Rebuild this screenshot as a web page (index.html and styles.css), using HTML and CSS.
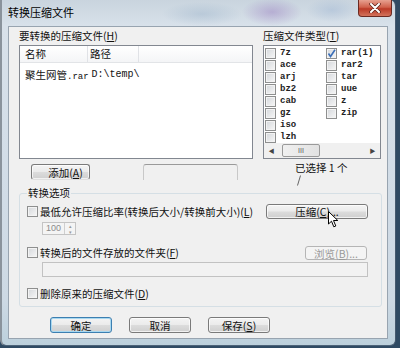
FILE: index.html
```html
<!DOCTYPE html>
<html lang="zh-CN">
<head>
    <meta charset="UTF-8">
    <title>转换压缩文件</title>
    <link rel="stylesheet" href="styles.css">
</head>
<body>

<div class="window">
    <div class="titlebar">
        <span class="title">转换压缩文件</span>
        <span class="close">
            <svg width="12" height="10" viewBox="0 0 12 10">
                <path d="M2 1 L10 9 M10 1 L2 9" stroke="#5a2018" stroke-width="3.4" stroke-linecap="round"/>
                <path d="M2 1 L10 9 M10 1 L2 9" stroke="#fff" stroke-width="2" stroke-linecap="round"/>
            </svg>
        </span>
    </div>

    <div class="client">
        <div class="top">
            <div class="col-files">
                <div class="label">要转换的压缩文件(<u>H</u>)</div>
                <div class="listview">
                    <div class="lv-head">
                        <span class="c1">名称</span>
                        <span class="c2">路径</span>
                        <span class="c3"></span>
                    </div>
                    <div class="lv-row">
                        <span class="name">聚生网管<span class="mono">.rar</span></span>
                        <span class="path mono">D:\temp\</span>
                    </div>
                </div>
                <div class="file-buttons">
                    <button class="btn btn-add">添加(<u>A</u>)</button>
                    <span class="btn-ghost"></span>
                </div>
            </div>

            <div class="col-types">
                <div class="label">压缩文件类型(<u>T</u>)</div>
                <div class="typebox">
                    <div class="types">
                        <div class="type"><span class="cb"></span>7z</div>
                        <div class="type"><span class="cb"></span>ace</div>
                        <div class="type"><span class="cb"></span>arj</div>
                        <div class="type"><span class="cb"></span>bz2</div>
                        <div class="type"><span class="cb"></span>cab</div>
                        <div class="type"><span class="cb"></span>gz</div>
                        <div class="type"><span class="cb"></span>iso</div>
                        <div class="type"><span class="cb"></span>lzh</div>
                        <div class="type"><span class="cb checked"><svg width="9" height="9" viewBox="0 0 9 9"><path d="M1.5 4.5 L3.5 7.5 L8 0.8" fill="none" stroke="#3b6fb8" stroke-width="1.6"/></svg></span>rar(1)</div>
                        <div class="type"><span class="cb"></span>rar2</div>
                        <div class="type"><span class="cb"></span>tar</div>
                        <div class="type"><span class="cb"></span>uue</div>
                        <div class="type"><span class="cb"></span>z</div>
                        <div class="type"><span class="cb"></span>zip</div>
                    </div>
                    <div class="hscroll">
                        <span class="arrow">&#9664;</span>
                        <span class="thumb">III</span>
                        <span class="arrow right">&#9654;</span>
                    </div>
                </div>
                <div class="selected">
                    已选择 1 个
                    <svg class="caret" width="6" height="11" viewBox="0 0 6 11"><path d="M4.5 0.5 L1.5 10.5" stroke="#666" stroke-width="1"/></svg>
                </div>
            </div>
        </div>

        <fieldset class="group">
            <legend>转换选项</legend>

            <div class="opt-row">
                <span class="cb"></span>
                <span class="opt-text">最低允许压缩比率(转换后大小/转换前大小)(<u>L</u>)</span>
                <button class="btn btn-compress">压缩(<u>C</u>)...
                    <svg class="pointer" width="11" height="17" viewBox="0 0 11 17">
                        <path d="M0.5 0.5 L0.5 13 L3.5 10.2 L5.8 15.8 L7.8 15 L5.5 9.5 L9.8 9.5 Z" fill="#fff" stroke="#000" stroke-width="1"/>
                    </svg>
                </button>
            </div>
            <div class="spin">
                <span class="spin-val">100</span>
                <span class="spin-btns"><span>&#9652;</span><span>&#9662;</span></span>
            </div>

            <div class="opt-row row-folder">
                <span class="cb"></span>
                <span class="opt-text">转换后的文件存放的文件夹(<u>F</u>)</span>
                <button class="btn btn-browse" disabled>浏览(<u>B</u>)...</button>
            </div>
            <div class="textfield"></div>

            <div class="opt-row row-delete">
                <span class="cb"></span>
                <span class="opt-text">删除原来的压缩文件(<u>D</u>)</span>
            </div>
        </fieldset>

        <div class="dialog-buttons">
            <button class="btn btn-default">确定</button>
            <button class="btn">取消</button>
            <button class="btn">保存(<u>S</u>)</button>
        </div>
    </div>
</div>

</body>
</html>
```

FILE: styles.css
```css
body {
    margin: 0;
    width: 400px;
    height: 348px;
    overflow: hidden;
    background: #2f4a63;
    font-family: "Noto Sans CJK SC", "Noto Sans", sans-serif;
    font-size: 10.5px;
    color: #111;
}
u {
    text-decoration: underline;
}
.window {
    width: 396px;
    height: 346px;
    box-sizing: border-box;
    border-left: 2px solid #8a939c;
    border-right: 1px solid #45596e;
    border-bottom: 1px solid #4d6378;
    border-radius: 0 6px 6px 6px;
    background:
        radial-gradient(ellipse 30px 14px at 270px 12px, rgba(150, 120, 190, 0.45), transparent),
        radial-gradient(ellipse 40px 12px at 200px 14px, rgba(150, 175, 200, 0.4), transparent),
        radial-gradient(ellipse 26px 12px at 330px 10px, rgba(170, 190, 215, 0.6), transparent),
        linear-gradient(#c9d4de, #d8e1ea 26px, #cdd9e4 300px, #bcd0dc);
}
.titlebar {
    height: 26px;
    display: flex;
    align-items: flex-start;
}
.title {
    padding-left: 6px;
    line-height: 24px;
    font-size: 11px;
    color: #000;
}
.close {
    margin-left: auto;
    margin-right: 3px;
    width: 34px;
    height: 17px;
    box-sizing: border-box;
    border: 1px solid #6b2a22;
    border-top: none;
    border-radius: 0 0 4px 4px;
    background: linear-gradient(#e7a190, #d0614c 45%, #bb3a27 55%, #d2735c);
    display: flex;
    align-items: center;
    justify-content: center;
}
.client {
    margin-left: 6px;
    width: 380px;
    height: 313px;
    box-sizing: border-box;
    border: 1px solid #98a4b0;
    background: #f0f0f0;
}
.top {
    display: flex;
    gap: 10px;
    padding: 1px 0 0 10px;
}
.label {
    line-height: 16px;
    height: 16px;
}
.col-files {
    width: 234px;
}
.listview {
    margin-top: 1px;
    height: 114px;
    box-sizing: border-box;
    border: 1px solid #828790;
    background: #fff;
}
.lv-head {
    display: flex;
    height: 16px;
    line-height: 16px;
    background: linear-gradient(#fff, #f4f5f7);
    border-bottom: 1px solid #e2e4e7;
}
.lv-head span {
    box-sizing: border-box;
    border-right: 1px solid #e0e2e6;
}
.lv-head .c3 {
    flex: 1;
    border-right: none;
}
.c1 {
    width: 68px;
    padding-left: 5px;
    box-sizing: border-box;
}
.c2 {
    width: 51px;
    padding-left: 2px;
    box-sizing: border-box;
}
.lv-row {
    display: flex;
    margin-top: 4px;
    padding-left: 5px;
    line-height: 16px;
    white-space: nowrap;
}
.name {
    padding-right: 3px;
}
.name .mono {
    font-size: 9px;
}
.mono {
    font-family: "Liberation Mono", monospace;
    font-size: 10px;
}
.file-buttons {
    display: flex;
    margin-top: 5px;
    padding-left: 12px;
    gap: 53px;
}
.btn {
    height: 16px;
    padding: 0;
    box-sizing: border-box;
    border: 1px solid #7a7a7a;
    border-radius: 3px;
    background: linear-gradient(#f4f4f4, #ebebeb 48%, #dcdcdc 52%, #cfcfcf);
    box-shadow: inset 0 0 0 1px rgba(255, 255, 255, 0.7);
    font-family: "Noto Sans CJK SC", "Noto Sans", sans-serif;
    font-size: 10.5px;
    line-height: 13px;
    color: #111;
}
.btn-add {
    width: 59px;
    border-bottom-color: #e0e0e0;
    padding-left: 10px;
}
.btn-ghost {
    width: 95px;
    height: 16px;
    box-sizing: border-box;
    border-top: 1px solid #9a9a9a;
    border-left: 1px solid #c8c8c8;
    border-right: 1px solid #c8c8c8;
    border-radius: 3px 3px 0 0;
}
.col-types {
    width: 118px;
}
.typebox {
    margin-top: 1px;
    height: 114px;
    box-sizing: border-box;
    border: 1px solid #828790;
    background: #fff;
    padding-top: 1px;
}
.types {
    display: grid;
    grid-template-rows: repeat(8, 12px);
    grid-template-columns: 61px 55px;
    grid-auto-flow: column;
    padding-left: 1px;
}
.type {
    display: flex;
    align-items: center;
    gap: 4px;
    font-family: "Liberation Mono", monospace;
    font-weight: bold;
    font-size: 9px;
    color: #222;
}
.cb {
    width: 11px;
    height: 11px;
    flex: none;
    box-sizing: border-box;
    border: 1px solid #8e8f8f;
    background: linear-gradient(135deg, #d4d7db, #f7f7f7);
    box-shadow: inset 0 0 0 1px #f3f3f3;
    display: flex;
    align-items: center;
    justify-content: center;
}
.hscroll {
    display: flex;
    align-items: center;
    height: 15px;
    background: #f0f0f0;
}
.arrow {
    width: 15px;
    text-align: center;
    font-size: 6px;
    color: #444;
}
.arrow.right {
    margin-left: auto;
}
.thumb {
    width: 38px;
    height: 13px;
    margin-left: 3px;
    box-sizing: border-box;
    border: 1px solid #9a9a9a;
    border-radius: 2px;
    background: linear-gradient(90deg, #f0f0f0, #e2e2e2);
    font-family: "Liberation Sans", sans-serif;
    font-size: 7px;
    line-height: 11px;
    text-align: center;
    color: #555;
}
.selected {
    position: relative;
    margin-top: 2px;
    padding-left: 32px;
    line-height: 14px;
}
.caret {
    position: absolute;
    left: 33px;
    top: 14px;
}
.group {
    margin: 6px 0 0 10px;
    width: 363px;
    height: 121px;
    box-sizing: border-box;
    padding: 0 0 5px 7px;
    border: 1px solid #d5dfe5;
    border-radius: 3px;
}
.group legend {
    padding: 0 1px;
    line-height: 14px;
}
.opt-row {
    display: flex;
    align-items: center;
    height: 16px;
    margin-top: 3px;
    gap: 2px;
}
.opt-text {
    white-space: nowrap;
}
.btn-compress {
    position: relative;
    margin-left: auto;
    margin-right: 13px;
    width: 102px;
    height: 15px;
}
.pointer {
    position: absolute;
    left: 61px;
    top: 6px;
}
.spin {
    display: flex;
    margin: 3px 0 0 15px;
    width: 34px;
    height: 13px;
    box-sizing: border-box;
    border: 1px solid #c4c4c4;
    background: #f4f4f4;
}
.spin-val {
    flex: 1;
    text-align: center;
    color: #8a8a8a;
    font-family: "Liberation Sans", sans-serif;
    font-size: 9px;
    line-height: 11px;
}
.spin-btns {
    width: 10px;
    display: flex;
    flex-direction: column;
    border-left: 1px solid #cfcfcf;
    font-size: 5px;
    line-height: 5.5px;
    text-align: center;
    color: #999;
}
.row-folder {
    margin-top: 10px;
    height: 15px;
}
.btn-browse {
    margin-left: auto;
    margin-right: 14px;
    width: 62px;
    height: 14px;
    border-color: #b5b5b5;
    background: #f4f4f4;
    color: #9a9a9a;
    box-shadow: none;
}
.textfield {
    margin: 2px 0 0 15px;
    width: 326px;
    height: 15px;
    box-sizing: border-box;
    border: 1px solid #c2c2c2;
    background: #f2f2f2;
}
.row-delete {
    margin-top: 9px;
    height: 14px;
}
.dialog-buttons {
    display: flex;
    gap: 17px;
    margin-top: 10px;
    padding-left: 41px;
}
.dialog-buttons .btn {
    width: 62px;
}
.btn-default {
    border-color: #3c7fb1;
    box-shadow: inset 0 0 0 1px #a8d8f0;
}
```
